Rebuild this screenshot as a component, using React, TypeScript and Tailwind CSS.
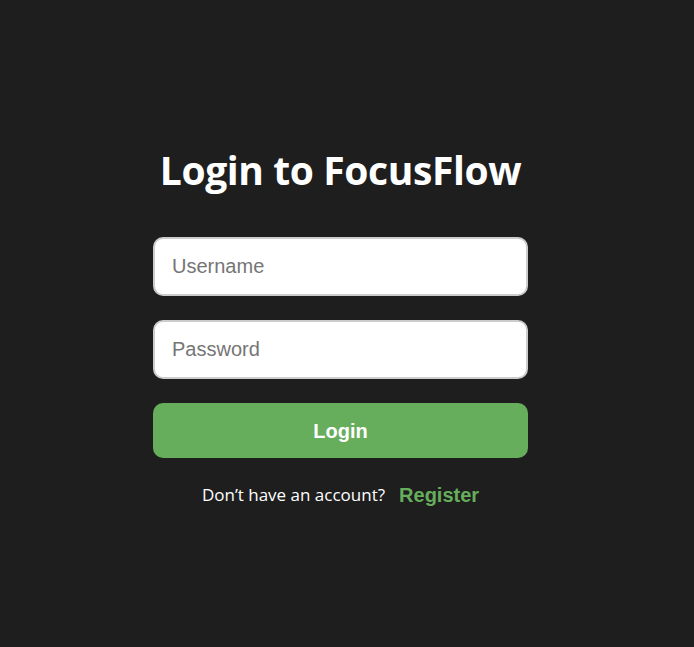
export default function App() {
  return (
    <div className="min-h-screen w-full bg-[#1e1e1e] flex items-center justify-center pr-[13px] pt-[10px]">
      <div className="w-[375px] flex flex-col items-center">
        <h1 className="text-[39px] leading-[46px] font-bold text-white font-['Open_Sans',sans-serif] tracking-[-0.4px] mb-[44px]">
          Login to FocusFlow
        </h1>
        <form className="w-full flex flex-col" onSubmit={(e) => e.preventDefault()}>
          <input
            type="text"
            placeholder="Username"
            className="w-full h-[59px] px-[17px] bg-white rounded-[10px] border-2 border-[#cccccc] text-[20px] font-['Liberation_Sans',Arial,sans-serif] text-black placeholder:text-[#757575] outline-none mb-[24px]"
          />
          <input
            type="password"
            placeholder="Password"
            className="w-full h-[59px] px-[17px] bg-white rounded-[10px] border-2 border-[#cccccc] text-[20px] font-['Liberation_Sans',Arial,sans-serif] text-black placeholder:text-[#757575] outline-none mb-[24px]"
          />
          <button
            type="submit"
            className="w-full h-[55px] rounded-[10px] bg-[#66ad5c] text-white text-[20px] font-bold font-['Liberation_Sans',Arial,sans-serif]"
          >
            Login
          </button>
        </form>
        <div className="mt-[22px] flex items-center gap-[14px]">
          <span className="text-[17px] text-white font-['Open_Sans',sans-serif]">Don’t have an account?</span>
          <a href="#" className="text-[20px] font-bold text-[#66ad5c] font-['Liberation_Sans',Arial,sans-serif]">
            Register
          </a>
        </div>
      </div>
    </div>
  );
}
